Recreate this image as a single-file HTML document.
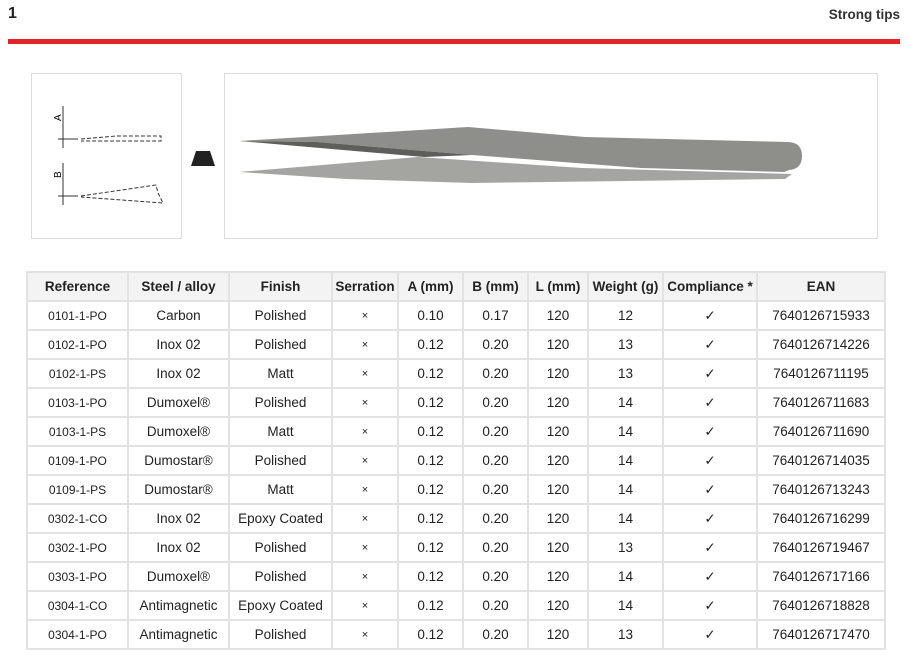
<!DOCTYPE html>
<html><head><style>
body{margin:0;width:910px;height:663px;background:#fff;font-family:"Liberation Sans",Arial,sans-serif;position:relative;overflow:hidden}
.abs{position:absolute}
table{position:absolute;left:26px;top:271px;border-collapse:collapse;table-layout:fixed;width:858px;font-size:13.5px;color:#222}
td,th{border:2px solid #e2e2e2;text-align:center;padding:0;height:27px;white-space:nowrap;overflow:hidden}
th{background:#f3f3f3;font-weight:bold;font-size:13.5px;height:27px}
td.r{font-size:12px}
td.x{font-size:11px}
</style></head><body>
<div class="abs" style="left:8px;top:5px;font-weight:bold;font-size:16px;color:#222">1</div>
<div class="abs" style="right:10px;top:7px;font-weight:bold;font-size:13.5px;color:#333">Strong tips</div>
<div class="abs" style="left:8px;top:39px;width:892px;height:5px;background:#e3242b"></div>
<div class="abs" style="left:31px;top:73px;width:149px;height:164px;border:1px solid #ddd"></div>
<svg class="abs" style="left:31px;top:73px" width="150" height="165">
<g stroke="#333" fill="none" stroke-width="1">
<line x1="32" y1="33" x2="32" y2="75"/><line x1="32" y1="90" x2="32" y2="132"/>
<line x1="27" y1="66" x2="47" y2="66"/><line x1="27" y1="123" x2="47" y2="123"/>
<path d="M50 66 L85 63 L130 63 L130 68 L50 68" stroke-dasharray="4 2"/>
<path d="M50 123 L125 112 L127 120 L132 130 L50 124" stroke-dasharray="4 2"/>
</g>
<text x="30" y="48" font-size="10" transform="rotate(-90 30 48)" font-family="Liberation Sans">A</text>
<text x="30" y="105" font-size="10" transform="rotate(-90 30 105)" font-family="Liberation Sans">B</text>
</svg>
<svg class="abs" style="left:191px;top:151px" width="24" height="15"><polygon points="5,0 19,0 24,15 0,15" fill="#222"/></svg>
<div class="abs" style="left:224px;top:73px;width:652px;height:164px;border:1px solid #ddd"></div>
<svg class="abs" style="left:224px;top:73px" width="653" height="165">
<path d="M15 99 L194 84 L358 95 L568 101 L561 106 L248 110 L122 106 Z" fill="#a4a4a0"/>
<path d="M15 68 L244 54 L361 64 L565 69 Q578 70 578 83 Q578 96 565 97 L560 99 L417 95 L248 82 L93 69 Z" fill="#8e8e8a"/>
<path d="M15 68 L93 69 L248 82 L200 84 Z" fill="#5e5e5a"/>
</svg>
<table>
<colgroup><col style="width:101px"><col style="width:101px"><col style="width:103px"><col style="width:66px"><col style="width:65px"><col style="width:65px"><col style="width:60px"><col style="width:75px"><col style="width:94px"><col style="width:128px"></colgroup>
<tr><th>Reference</th><th>Steel / alloy</th><th>Finish</th><th>Serration</th><th>A (mm)</th><th>B (mm)</th><th>L (mm)</th><th>Weight (g)</th><th>Compliance *</th><th>EAN</th></tr>
<tr><td class="r">0101-1-PO</td><td>Carbon</td><td>Polished</td><td class="x">×</td><td>0.10</td><td>0.17</td><td>120</td><td>12</td><td>✓</td><td>7640126715933</td></tr>
<tr><td class="r">0102-1-PO</td><td>Inox 02</td><td>Polished</td><td class="x">×</td><td>0.12</td><td>0.20</td><td>120</td><td>13</td><td>✓</td><td>7640126714226</td></tr>
<tr><td class="r">0102-1-PS</td><td>Inox 02</td><td>Matt</td><td class="x">×</td><td>0.12</td><td>0.20</td><td>120</td><td>13</td><td>✓</td><td>7640126711195</td></tr>
<tr><td class="r">0103-1-PO</td><td>Dumoxel®</td><td>Polished</td><td class="x">×</td><td>0.12</td><td>0.20</td><td>120</td><td>14</td><td>✓</td><td>7640126711683</td></tr>
<tr><td class="r">0103-1-PS</td><td>Dumoxel®</td><td>Matt</td><td class="x">×</td><td>0.12</td><td>0.20</td><td>120</td><td>14</td><td>✓</td><td>7640126711690</td></tr>
<tr><td class="r">0109-1-PO</td><td>Dumostar®</td><td>Polished</td><td class="x">×</td><td>0.12</td><td>0.20</td><td>120</td><td>14</td><td>✓</td><td>7640126714035</td></tr>
<tr><td class="r">0109-1-PS</td><td>Dumostar®</td><td>Matt</td><td class="x">×</td><td>0.12</td><td>0.20</td><td>120</td><td>14</td><td>✓</td><td>7640126713243</td></tr>
<tr><td class="r">0302-1-CO</td><td>Inox 02</td><td>Epoxy Coated</td><td class="x">×</td><td>0.12</td><td>0.20</td><td>120</td><td>14</td><td>✓</td><td>7640126716299</td></tr>
<tr><td class="r">0302-1-PO</td><td>Inox 02</td><td>Polished</td><td class="x">×</td><td>0.12</td><td>0.20</td><td>120</td><td>13</td><td>✓</td><td>7640126719467</td></tr>
<tr><td class="r">0303-1-PO</td><td>Dumoxel®</td><td>Polished</td><td class="x">×</td><td>0.12</td><td>0.20</td><td>120</td><td>14</td><td>✓</td><td>7640126717166</td></tr>
<tr><td class="r">0304-1-CO</td><td>Antimagnetic</td><td>Epoxy Coated</td><td class="x">×</td><td>0.12</td><td>0.20</td><td>120</td><td>14</td><td>✓</td><td>7640126718828</td></tr>
<tr><td class="r">0304-1-PO</td><td>Antimagnetic</td><td>Polished</td><td class="x">×</td><td>0.12</td><td>0.20</td><td>120</td><td>13</td><td>✓</td><td>7640126717470</td></tr>
</table>
</body></html>
